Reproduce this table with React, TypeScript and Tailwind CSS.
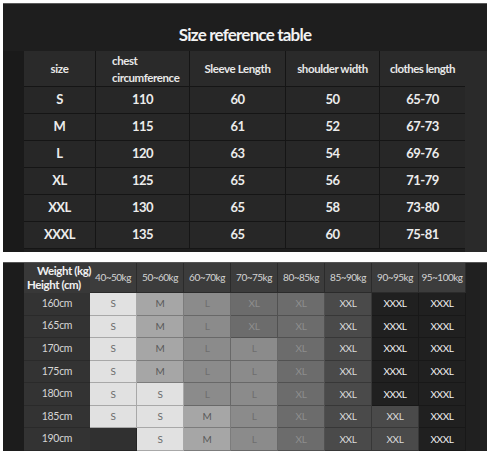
import React from "react";

const top = [
  ["S", "110", "60", "50", "65-70"],
  ["M", "115", "61", "52", "67-73"],
  ["L", "120", "63", "54", "69-76"],
  ["XL", "125", "65", "56", "71-79"],
  ["XXL", "130", "65", "58", "73-80"],
  ["XXXL", "135", "65", "60", "75-81"],
];

const weights = ["40~50kg", "50~60kg", "60~70kg", "70~75kg", "80~85kg", "85~90kg", "90~95kg", "95~100kg"];

const grid: [string, string[]][] = [
  ["160cm", ["S", "M", "L", "XL", "XL", "XXL", "XXXL", "XXXL"]],
  ["165cm", ["S", "M", "L", "XL", "XL", "XXL", "XXXL", "XXXL"]],
  ["170cm", ["S", "M", "L", "L", "XL", "XXL", "XXXL", "XXXL"]],
  ["175cm", ["S", "M", "L", "L", "XL", "XXL", "XXXL", "XXXL"]],
  ["180cm", ["S", "S", "L", "L", "XL", "XXL", "XXXL", "XXXL"]],
  ["185cm", ["S", "S", "M", "L", "XL", "XXL", "XXL", "XXXL"]],
  ["190cm", ["", "S", "M", "L", "XL", "XXL", "XXL", "XXXL"]],
];

const sizeCls: Record<string, string> = {
  S: "bg-[#e1e1e1] text-[#6b6b6b]",
  M: "bg-[#a6a6a6] text-[#5a5a5a]",
  L: "bg-[#8b8b8b] text-[#6e6e6e]",
  XL: "bg-[#6c6c6c] text-[#8e8e8e]",
  XXL: "bg-[#4a4a4a] text-[#dcdcdc]",
  XXXL: "bg-[#202020] text-[#f0f0f0]",
  "": "bg-[#303030]",
};

export default function App() {
  return (
    <div className="w-[490px] h-[455px] bg-white pt-[3px] pl-[3px] font-['Lato',sans-serif]">
      {/* Top panel */}
      <div className="w-[484px] h-[249px] bg-[#1e1e1e] border-t border-[#5a5a5a] flex flex-col">
        <div className="h-[47px] pt-[21px] text-center text-[17px] leading-[20px] font-bold tracking-[-0.8px] text-[#f2f2f2]">
          Size reference table
        </div>
        <div className="flex flex-1">
          <div className="w-[21px] bg-[#1a1a1a]" />
          <div className="w-[441px] h-[198px] grid grid-cols-[71px_93px_95px_93px_85px] grid-rows-[35px_repeat(6,1fr)] gap-px bg-[#151515] border-b border-[#151515] text-[#e8e8e8]">
            <div className="bg-[#2a2a2a] flex items-center justify-center text-[11.5px] font-bold tracking-[-0.3px]">size</div>
            <div className="bg-[#2a2a2a] flex flex-col justify-center pl-[16px] text-[11.5px] leading-[17px] font-bold tracking-[-0.4px]">
              <span>chest</span>
              <span>circumference</span>
            </div>
            <div className="bg-[#2a2a2a] flex items-center justify-center text-[11.5px] font-bold tracking-[-0.4px]">Sleeve Length</div>
            <div className="bg-[#2a2a2a] flex items-center justify-center text-[11.5px] font-bold tracking-[-0.4px]">shoulder width</div>
            <div className="bg-[#2a2a2a] flex items-center justify-center text-[11.5px] font-bold tracking-[-0.5px]">clothes length</div>
            {top.map((r) =>
              r.map((v, i) => (
                <div key={r[0] + i} className="bg-[#272727] flex items-center justify-center text-[13px] font-bold tracking-[-0.5px] text-[#ececec]">
                  {v}
                </div>
              ))
            )}
          </div>
          <div className="flex-1 bg-[#2a2a2a]" />
        </div>
      </div>

      {/* Bottom panel */}
      <div className="mt-[10px] w-[484px] h-[189px] bg-[#2a2a2a] border-t border-[#555] flex">
        <div className="w-[21px] bg-[#1c1c1c]" />
        <div className="w-[442px] grid grid-cols-[66px_repeat(8,1fr)] grid-rows-[30px_repeat(7,1fr)]">
          <div className="relative z-10 bg-[#383838] flex flex-col justify-center text-[11.5px] leading-[14px] font-bold tracking-[-0.4px] text-[#f0f0f0] whitespace-nowrap">
            <span className="pl-[13px]">Weight (kg)</span>
            <span className="pl-[3px]">Height (cm)</span>
          </div>
          {weights.map((w) => (
            <div key={w} className="bg-[#3c3c3c] border-r border-b border-[#2b2b2b] flex items-center justify-center text-[10px] tracking-[-0.5px] text-[#d4d4d4]">
              {w}
            </div>
          ))}
          {grid.map(([h, cells]) => (
            <React.Fragment key={h}>
              <div className="bg-[#333333] border-b border-[#2a2a2a] flex items-center justify-center text-[10.5px] tracking-[-0.3px] text-[#d6d6d6]">
                {h}
              </div>
              {cells.map((c, i) => (
                <div
                  key={h + i}
                  className={`${sizeCls[c]} border-r border-b border-black/25 flex items-center justify-center text-[10px] tracking-[-0.4px]`}
                >
                  {c}
                </div>
              ))}
            </React.Fragment>
          ))}
        </div>
        <div className="flex-1 bg-[#202020]" />
      </div>
    </div>
  );
}
